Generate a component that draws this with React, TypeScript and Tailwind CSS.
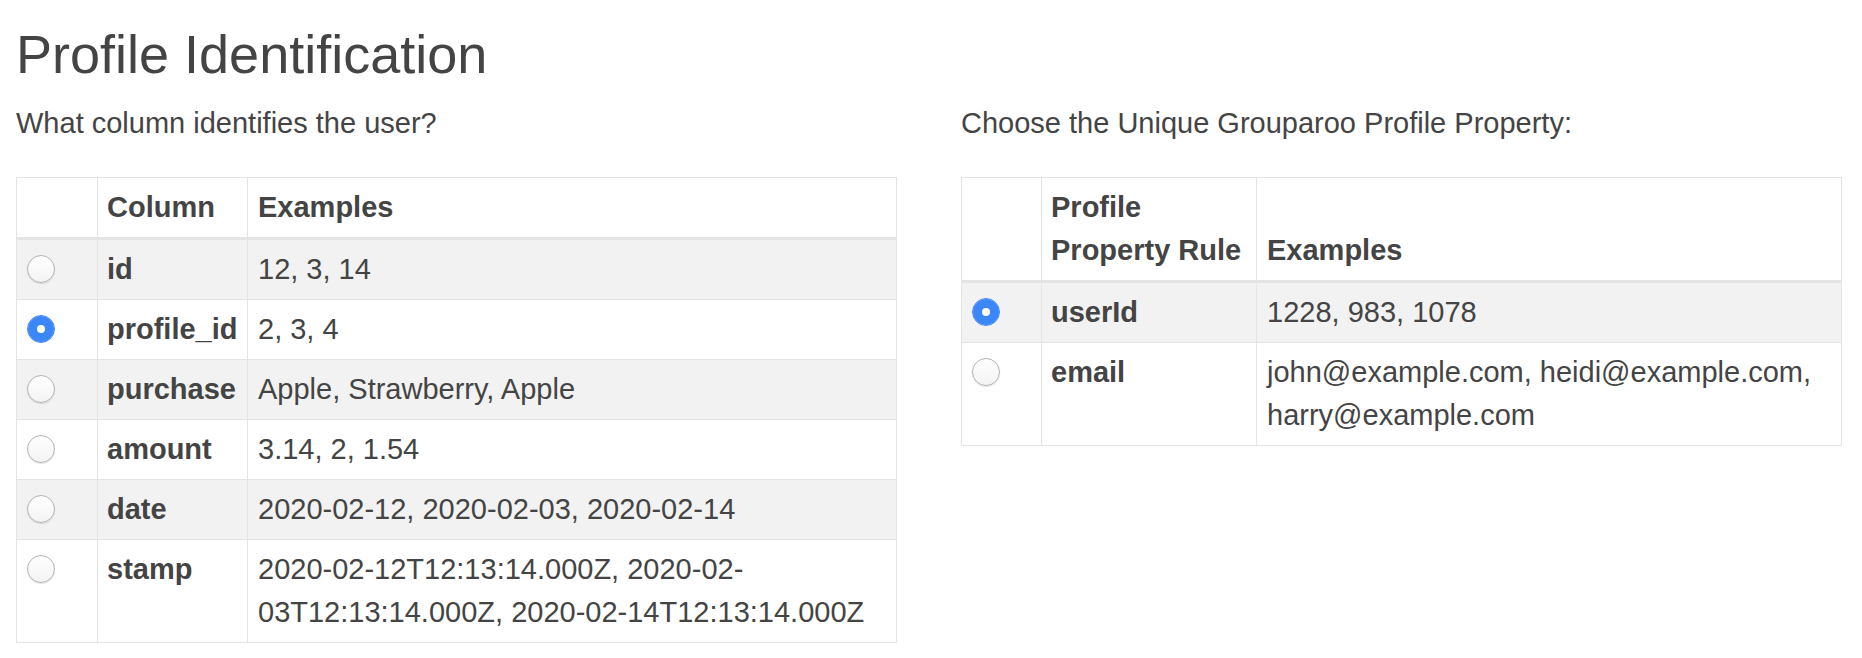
import React from "react";

type Row = { name: string; examples: React.ReactNode; checked?: boolean };

const columns: Row[] = [
  { name: "id", examples: "12, 3, 14" },
  { name: "profile_id", examples: "2, 3, 4", checked: true },
  { name: "purchase", examples: "Apple, Strawberry, Apple" },
  { name: "amount", examples: "3.14, 2, 1.54" },
  { name: "date", examples: "2020-02-12, 2020-02-03, 2020-02-14" },
  {
    name: "stamp",
    examples: (
      <>
        2020-02-12T12:13:14.000Z, 2020-02-
        <wbr />
        03T12:13:14.000Z, 2020-02-14T12:13:14.000Z
      </>
    ),
  },
];

const rules: Row[] = [
  { name: "userId", examples: "1228, 983, 1078", checked: true },
  { name: "email", examples: "john@example.com, heidi@example.com, harry@example.com" },
];

function Radio({ name, checked }: { name: string; checked?: boolean }) {
  return (
    <input
      type="radio"
      name={name}
      defaultChecked={checked}
      className="block appearance-none w-[28px] h-[28px] mt-[7px] ml-[1px] rounded-full border border-[#b4b4b4] bg-gradient-to-b from-white to-[#f3f3f3] shadow-[0_1px_1px_rgba(0,0,0,0.12)] checked:border-[#3b87f7] checked:bg-white checked:bg-none checked:shadow-[inset_0_0_0_9px_#3b87f7]"
    />
  );
}

function PickTable({
  group,
  heading,
  rows,
  widths,
}: {
  group: string;
  heading: React.ReactNode;
  rows: Row[];
  widths: [string, string];
}) {
  return (
    <table className="w-full table-fixed border-collapse border border-[#e4e4e4]">
      <colgroup>
        <col className={widths[0]} />
        <col className={widths[1]} />
        <col />
      </colgroup>
      <thead>
        <tr>
          <th className="border border-[#e4e4e4] border-b-[3px]" />
          <th className="border border-[#e4e4e4] border-b-[3px] px-[9px] py-[8px] text-left align-bottom font-bold">
            {heading}
          </th>
          <th className="border border-[#e4e4e4] border-b-[3px] px-[10px] py-[8px] text-left align-bottom font-bold">
            Examples
          </th>
        </tr>
      </thead>
      <tbody>
        {rows.map((r) => (
          <tr key={r.name} className="odd:bg-[#f2f2f2]">
            <td className="border border-[#e4e4e4] pl-[9px] py-[8px] align-top">
              <Radio name={group} checked={r.checked} />
            </td>
            <td className="border border-[#e4e4e4] px-[9px] py-[8px] align-top font-bold whitespace-nowrap">
              {r.name}
            </td>
            <td className="border border-[#e4e4e4] px-[10px] py-[8px] align-top">{r.examples}</td>
          </tr>
        ))}
      </tbody>
    </table>
  );
}

export default function App() {
  return (
    <div className="min-h-screen bg-white pl-[16px] pr-[20px] pt-[22px] font-['Liberation_Sans',Arial,sans-serif] text-[#444] text-[29px] leading-[43px]">
      <h1 className="text-[54px] leading-[65px] font-normal">Profile Identification</h1>
      <div className="mt-[15px] grid grid-cols-2 gap-x-[64px]">
        <div>
          <p className="mb-[32px]">What column identifies the user?</p>
          <PickTable group="column" heading="Column" rows={columns} widths={["w-[81px]", "w-[150px]"]} />
        </div>
        <div>
          <p className="mb-[32px]">Choose the Unique Grouparoo Profile Property:</p>
          <PickTable
            group="rule"
            heading="Profile Property Rule"
            rows={rules}
            widths={["w-[80px]", "w-[215px]"]}
          />
        </div>
      </div>
    </div>
  );
}
